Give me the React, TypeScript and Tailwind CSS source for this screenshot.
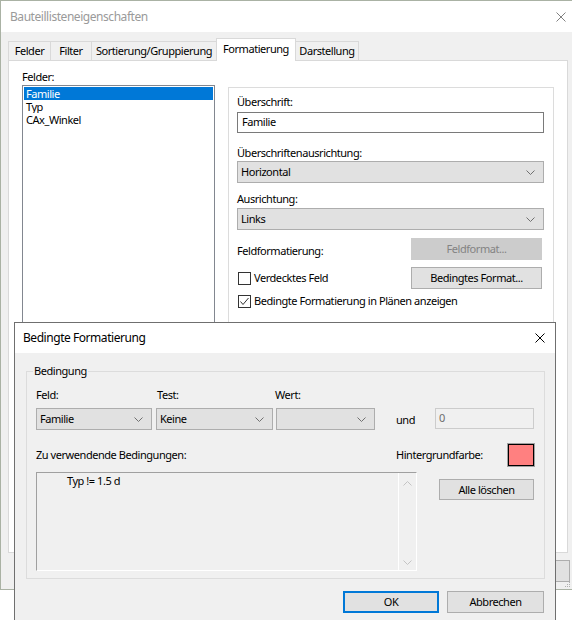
import React from "react";

const Chevron = ({ color = "#707070" }: { color?: string }) => (
  <svg width="9" height="5" viewBox="0 0 9 5" className="shrink-0">
    <path d="M0.5 0.5 L4.5 4.5 L8.5 0.5" fill="none" stroke={color} strokeWidth="1" />
  </svg>
);

const Close = ({ color, size }: { color: string; size: number }) => (
  <svg width={size} height={size} viewBox={`0 0 ${size} ${size}`}>
    <path d={`M0.5 0.5 L${size - 0.5} ${size - 0.5} M${size - 0.5} 0.5 L0.5 ${size - 0.5}`} stroke={color} strokeWidth="1" />
  </svg>
);

function Combo({ cls, text }: { cls: string; text: string }) {
  return (
    <div className={`flex items-center justify-between border border-[#adadad] bg-[#e1e1e1] pl-[3px] pr-[8px] ${cls}`}>
      <span className="leading-[14px]">{text}</span>
      <Chevron />
    </div>
  );
}

function Button({ cls, children }: { cls: string; children: React.ReactNode }) {
  return <div className={`flex items-center justify-center leading-[14px] ${cls}`}>{children}</div>;
}

export default function App() {
  return (
    <div className="relative h-[620px] w-[572px] overflow-hidden bg-white font-['Noto_Sans',sans-serif] text-[11px] tracking-[-0.45px] text-black">
      {/* main window */}
      <div className="relative flex h-[590px] flex-col border-b border-l border-t border-[#aab2a4] bg-[#f0f0f0]">
        <div className="flex h-[31px] shrink-0 items-center justify-between bg-white pl-[9px] pr-[6px] text-[12px] text-[#9a9a9a]">
          <span>Bauteillisteneigenschaften</span>
          <Close color="#808080" size={10} />
        </div>
        <div className="flex flex-col pl-[7px] pt-[6px]">
          {/* tabs */}
          <div className="flex h-[22px] items-end">
            <div className="flex h-[19px] w-[42px] items-center justify-center border-l border-t border-[#d9d9d9]">Felder</div>
            <div className="flex h-[19px] w-[41px] items-center justify-center border-l border-t border-[#d9d9d9]">Filter</div>
            <div className="flex h-[19px] w-[125px] items-center justify-center border-l border-t border-[#d9d9d9]">Sortierung/Gruppierung</div>
            <div className="relative z-10 -mb-px flex h-[23px] w-[80px] items-center justify-center border-l border-r border-t border-[#d9d9d9] bg-white pb-[1px]">Formatierung</div>
            <div className="flex h-[19px] w-[63px] items-center justify-center border-r border-t border-[#d9d9d9]">Darstellung</div>
          </div>
          {/* panel */}
          <div className="flex h-[493px] w-[560px] border border-[#d9d9d9] bg-white">
            <div className="flex flex-col pl-[13px] pt-[9px]">
              <div className="mb-[1px] leading-[14px]">Felder:</div>
              <div className="h-[440px] w-[193px] border border-[#828790] p-px">
                <div className="h-[13px] overflow-hidden bg-[#0078d7] pl-[2px] leading-[13px] text-white">Familie</div>
                <div className="h-[13px] overflow-hidden pl-[2px] leading-[13px]">Typ</div>
                <div className="h-[13px] overflow-hidden pl-[2px] leading-[13px]">CAx_Winkel</div>
              </div>
            </div>
            <div className="ml-[13px] mt-[26px] flex h-[300px] w-[326px] flex-col border border-[#dcdcdc] pl-[8px] pt-[7px]">
              <div className="leading-[14px]">Überschrift:</div>
              <div className="mt-[3px] flex h-[21px] w-[307px] items-center border border-[#7a7a7a] bg-white pl-[4px]">Familie</div>
              <div className="mt-[13px] leading-[14px]">Überschriftenausrichtung:</div>
              <Combo cls="mt-[1px] h-[22px] w-[307px]" text="Horizontal" />
              <div className="mt-[9px] leading-[14px]">Ausrichtung:</div>
              <Combo cls="mt-[2px] h-[22px] w-[307px]" text="Links" />
              <div className="mt-[8px] flex w-[305px] items-center justify-between">
                <span className="pt-[4px]">Feldformatierung:</span>
                <Button cls="h-[22px] w-[131px] border border-[#cccccc] bg-[#cccccc] text-[#838383]">Feldformat...</Button>
              </div>
              <div className="mt-[7px] flex w-[305px] items-center justify-between">
                <div className="flex items-center">
                  <div className="ml-px h-[13px] w-[13px] border border-[#333333] bg-white" />
                  <span className="ml-[3px]">Verdecktes Feld</span>
                </div>
                <Button cls="h-[22px] w-[131px] border border-[#adadad] bg-[#e1e1e1]">Bedingtes Format...</Button>
              </div>
              <div className="mt-[4px] flex items-center">
                <div className="ml-px flex h-[13px] w-[13px] items-center justify-center border border-[#333333] bg-white">
                  <svg width="11" height="11" viewBox="0 0 11 11">
                    <path d="M1.5 5.5 L4 8.5 L9.5 2" fill="none" stroke="#333333" strokeWidth="1" />
                  </svg>
                </div>
                <span className="ml-[3px]">Bedingte Formatierung in Plänen anzeigen</span>
              </div>
            </div>
          </div>
          {/* bottom buttons of main window */}
          <div className="mt-[7px] flex justify-end pr-[2px]">
            <Button cls="h-[22px] w-[75px] border border-[#adadad] bg-[#e1e1e1]">Hilfe</Button>
          </div>
        </div>
        <svg className="absolute bottom-[1px] right-[1px]" width="6" height="6" viewBox="0 0 6 6">
          <rect x="4" y="0" width="1" height="1" fill="#b0b0b0" />
          <rect x="2" y="2" width="1" height="1" fill="#b0b0b0" />
          <rect x="4" y="2" width="1" height="1" fill="#b0b0b0" />
          <rect x="0" y="4" width="1" height="1" fill="#b0b0b0" />
          <rect x="2" y="4" width="1" height="1" fill="#b0b0b0" />
          <rect x="4" y="4" width="1" height="1" fill="#b0b0b0" />
        </svg>
      </div>

      {/* dialog */}
      <div className="absolute left-[14px] top-[322px] flex h-[310px] w-[542px] flex-col border border-[#6f6f6f] bg-[#f0f0f0]">
        <div className="flex h-[30px] shrink-0 items-center justify-between bg-white pl-[8px] pr-[10px] text-[12px]">
          <span>Bedingte Formatierung</span>
          <Close color="#000000" size={10} />
        </div>
        <div className="relative ml-[11px] mt-[18px] flex h-[208px] w-[519px] flex-col border border-[#dcdcdc] pl-[9px] pt-[16px]">
          <div className="absolute -top-[8px] left-[6px] bg-[#f0f0f0] px-px leading-[14px]">Bedingung</div>
          <div className="flex leading-[14px]">
            <span className="w-[120px]">Feld:</span>
            <span className="w-[119px] pl-px">Test:</span>
            <span>Wert:</span>
          </div>
          <div className="mt-[6px] flex items-start">
            <Combo cls="h-[22px] w-[116px]" text="Familie" />
            <Combo cls="ml-[4px] h-[22px] w-[117px]" text="Keine" />
            <Combo cls="ml-[3px] h-[22px] w-[99px]" text="" />
            <span className="ml-[21px] mt-[4px] w-[39px]">und</span>
            <div className="flex h-[21px] w-[99px] items-center border border-[#cccccc] pl-[3px] text-[#6d6d6d]">0</div>
          </div>
          <div className="mt-[13px] flex h-[24px] items-center">
            <span className="w-[360px]">Zu verwendende Bedingungen:</span>
            <span className="w-[111px]">Hintergrundfarbe:</span>
            <div className="h-[24px] w-[28px] border border-[#a0a0a0] p-0">
              <div className="h-full w-full border border-black bg-[#ff8080]" />
            </div>
          </div>
          <div className="mt-[5px] flex items-start">
            <div className="flex h-[99px] w-[381px] border-b border-l border-r border-t border-b-white border-l-[#a0a0a0] border-r-white border-t-[#a0a0a0]">
              <div className="flex-1 pl-[30px] pt-[1px] leading-[14px]">Typ != 1.5 d</div>
              <div className="flex w-[18px] flex-col items-center justify-between border-l border-white pb-[5px] pt-[8px]">
                <svg width="9" height="5" viewBox="0 0 9 5">
                  <path d="M0.5 4.5 L4.5 0.5 L8.5 4.5" fill="none" stroke="#c4c4c4" strokeWidth="1" />
                </svg>
                <Chevron color="#c4c4c4" />
              </div>
            </div>
            <Button cls="ml-[22px] mt-[7px] h-[21px] w-[95px] border border-[#adadad] bg-[#e1e1e1]">Alle löschen</Button>
          </div>
        </div>
        <div className="mt-[12px] flex justify-end gap-[8px] pr-[11px]">
          <Button cls="h-[22px] w-[96px] border-2 border-[#0078d7] bg-[#e1e1e1]">OK</Button>
          <Button cls="h-[22px] w-[97px] border border-[#adadad] bg-[#e1e1e1]">Abbrechen</Button>
        </div>
      </div>
    </div>
  );
}
